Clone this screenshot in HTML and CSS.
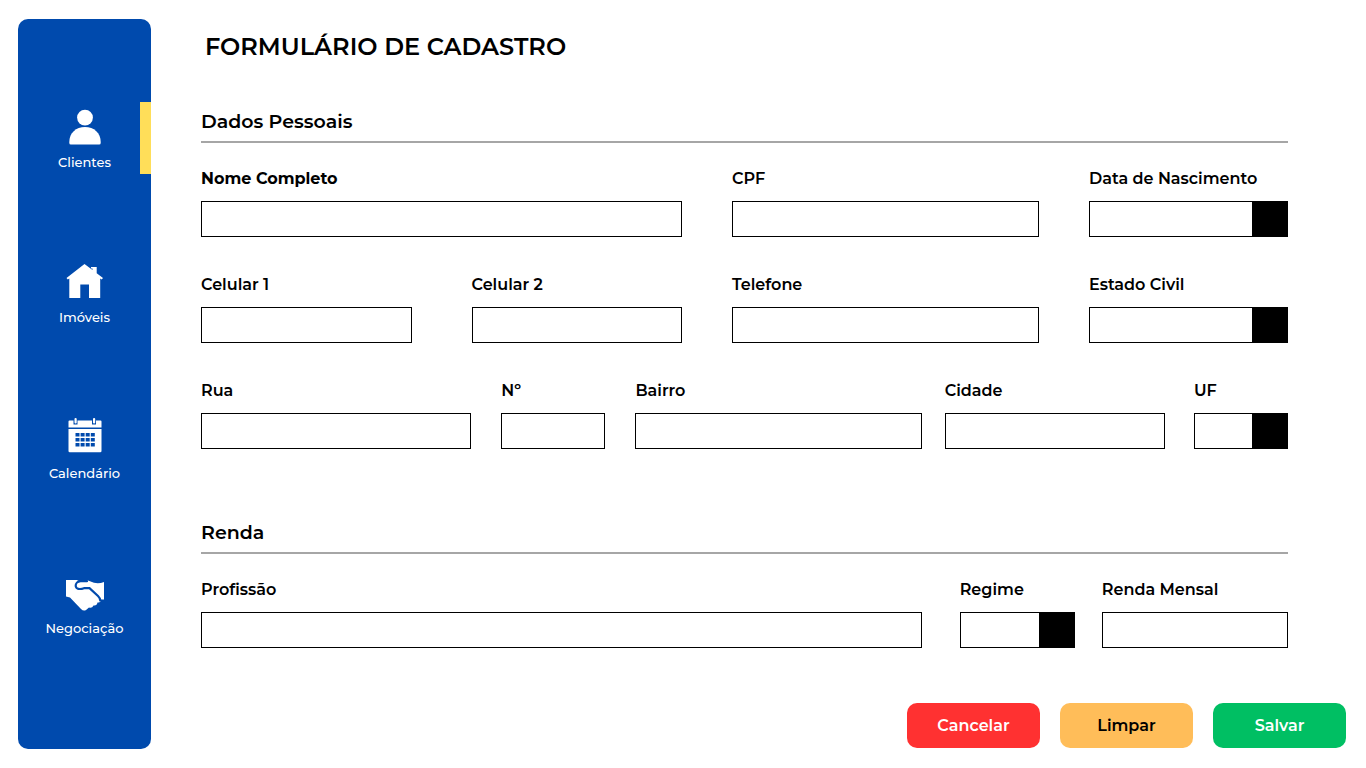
FILE: index.html
```html
<!DOCTYPE html>
<html lang="pt-BR">
<head>
<meta charset="utf-8">
<meta name="viewport" content="width=device-width, initial-scale=1">
<title>Formulário de Cadastro</title>
<link rel="stylesheet" href="styles.css">
</head>
<body>
<nav class="sidebar">
  <a class="nav-item active" href="#clientes">
    <svg class="nav-icon" viewBox="0 0 40 36" aria-hidden="true"><circle cx="20" cy="8.600" r="7.900"/><path d="M4.300 34V33C4.300 24 11 18 20 18S35.700 24 35.700 33V34Q35.700 35.500 34.200 35.500H5.800Q4.300 35.500 4.300 34Z"/></svg>
    <span>Clientes</span>
  </a>
  <a class="nav-item" href="#imoveis">
    <svg class="nav-icon" viewBox="0 0 40 36" aria-hidden="true"><path d="M19.500 0 27.500 6V4.600H26V3H31.700V9.300L38 14 36.700 15.500 35.200 14.500V34H24V20.500H15.300V34H4.300V14.500L2.800 15.500 1.500 14Z"/></svg>
    <span>Imóveis</span>
  </a>
  <a class="nav-item" href="#calendario">
    <svg class="nav-icon" viewBox="0 0 40 36" aria-hidden="true"><path d="M3.500 1.500Q3.500 .500 4.500 .500H8.500V4.500H12.500V.500H27V4.500H31V.500H35.500Q36.500 .500 36.500 1.500V7.500H3.500Z"/><rect x="9.500" y="-2" width="2.200" height="5.500" rx="1"/><rect x="28" y="-2" width="2.200" height="5.500" rx="1"/><path fill-rule="evenodd" d="M3.500 9H36.500V31Q36.500 32.300 35.200 32.300H4.800Q3.500 32.300 3.500 31ZM10.500 13v3.500h4V13ZM15.600 13v3.500h4V13ZM20.700 13v3.500h4V13ZM25.800 13v3.500h4V13ZM10.500 18v3.500h4V18ZM15.600 18v3.500h4V18ZM20.700 18v3.500h4V18ZM25.800 18v3.500h4V18ZM10.500 23v3.500h4V23ZM15.600 23v3.500h4V23ZM20.700 23v3.500h4V23ZM25.800 23v3.500h4V23Z"/></svg>
    <span>Calendário</span>
  </a>
  <a class="nav-item" href="#negociacao">
    <svg class="nav-icon" viewBox="0 0 40 36" aria-hidden="true"><path d="M1 5H12Q14 6.500 17 5.500Q20 4.500 23 5.500L29 7.800Q34 9 39 7V24.500H36Q36 28 32.500 27.500Q32 31 28.500 30.500Q27 33.500 24 32.500L21 35Q18.500 36.500 16 34L5 22.500L1 21.500Z"/><path class="grip" d="M22 6.200H15.500C12.500 6.500 10.500 8.500 10.700 11C11 14 14.500 14.800 19 13.200H24.500L33 21Q35 23 35.300 25.500"/></svg>
    <span>Negociação</span>
  </a>
</nav>

<main class="content">
  <form>
    <h1>FORMULÁRIO DE CADASTRO</h1>

    <section class="section">
      <h2>Dados Pessoais</h2>
      <div class="rows">
        <div class="row personal">
          <div class="field main-field"><label for="nome">Nome Completo</label><input id="nome" type="text"></div>
          <div class="field"><label for="cpf">CPF</label><input id="cpf" type="text"></div>
          <div class="field"><label for="nascimento">Data de Nascimento</label>
            <div class="date"><input id="nascimento" type="text"><button type="button" aria-label="Abrir calendário"></button></div>
          </div>
        </div>
        <div class="row personal">
          <div class="row phones">
            <div class="field"><label for="celular1">Celular 1</label><input id="celular1" type="text"></div>
            <div class="field"><label for="celular2">Celular 2</label><input id="celular2" type="text"></div>
          </div>
          <div class="field"><label for="telefone">Telefone</label><input id="telefone" type="text"></div>
          <div class="field"><label for="civil">Estado Civil</label><select id="civil"><option></option></select></div>
        </div>
        <div class="row address">
          <div class="row street">
            <div class="field"><label for="rua">Rua</label><input id="rua" type="text"></div>
            <div class="field"><label for="numero">Nº</label><input id="numero" type="text"></div>
            <div class="field"><label for="bairro">Bairro</label><input id="bairro" type="text"></div>
          </div>
          <div class="row city">
            <div class="field"><label for="cidade">Cidade</label><input id="cidade" type="text"></div>
            <div class="field"><label for="uf">UF</label><select id="uf"><option></option></select></div>
          </div>
        </div>
      </div>
    </section>

    <section class="section">
      <h2>Renda</h2>
      <div class="row income">
        <div class="field"><label for="profissao">Profissão</label><input id="profissao" type="text"></div>
        <div class="row earnings">
          <div class="field"><label for="regime">Regime</label><select id="regime"><option></option></select></div>
          <div class="field"><label for="renda">Renda Mensal</label><input id="renda" type="text"></div>
        </div>
      </div>
    </section>

    <div class="actions">
      <button class="btn cancel" type="button">Cancelar</button>
      <button class="btn clear" type="reset">Limpar</button>
      <button class="btn save" type="submit">Salvar</button>
    </div>
  </form>
</main>
</body>
</html>
```
FILE: styles.css
```css
* { box-sizing: border-box; }

body {
  margin: 0;
  min-height: 100vh;
  display: flex;
  gap: 50px;
  padding: 19px 20px 19px 18px;
  background: #fff;
  color: #000;
  font-family: Montserrat, Inter, sans-serif;
}

.sidebar {
  flex: 0 0 133px;
  display: flex;
  flex-direction: column;
  justify-content: space-between;
  padding: 83px 0 109px;
  border-radius: 10px;
  background: #004aad;
}

.nav-item {
  display: flex;
  flex-direction: column;
  align-items: center;
  gap: 7px;
  height: 72px;
  padding-top: 7px;
  color: #fff;
  font-size: 13px;
  font-weight: 500;
  line-height: 20px;
  text-decoration: none;
}

.nav-item.active {
  background: linear-gradient(#ffde59, #ffde59) right / 11px 100% no-repeat;
}

.nav-icon { width: 40px; height: 36px; fill: #fff; overflow: visible; }
.grip { fill: none; stroke: #004aad; stroke-width: 2.2; stroke-linecap: round; }

.content { flex: 1; min-width: 0; }

h1 {
  margin: 12px 4px 0;
  font-size: 24px;
  font-weight: 600;
  line-height: 32px;
}

.section { margin-right: 58px; }
.section:first-of-type { margin-top: 47px; }
.section + .section { margin-top: 72px; }

h2 {
  margin: 0 0 26px;
  padding-bottom: 7px;
  border-bottom: 2px solid #a6a6a6;
  font-size: 19px;
  font-weight: 600;
  line-height: 24px;
}

.rows { display: grid; gap: 38px; }
.row { display: grid; }
.personal { grid-template-columns: 481fr 307fr 199fr; gap: 50px; }
.phones { grid-template-columns: 1fr 1fr; gap: 60px; }
.address { grid-template-columns: 720fr 343fr; gap: 23px; }
.street { grid-template-columns: 270fr 104fr 286fr; gap: 30px; }
.city { grid-template-columns: 220fr 94fr; gap: 29px; }
.income { grid-template-columns: 720fr 328fr; gap: 38px; }
.earnings { grid-template-columns: 115fr 186fr; gap: 27px; }

.field {
  display: flex;
  flex-direction: column;
  gap: 12px;
  min-width: 0;
}

label {
  font-size: 16px;
  font-weight: 600;
  line-height: 20px;
  white-space: nowrap;
}

.main-field label { font-weight: 700; }

input, select {
  width: 100%;
  min-width: 0;
  height: 36px;
  margin: 0;
  padding: 0 8px;
  border: 1px solid #000;
  border-radius: 0;
  background: #fff;
  font: inherit;
}

select {
  appearance: none;
  padding-right: 44px;
  background: linear-gradient(#000, #000) right / 35px 100% no-repeat #fff;
}

.date { display: flex; }
.date button { flex: 0 0 35px; padding: 0; border: 0; background: #000; }

.actions {
  display: flex;
  justify-content: flex-end;
  gap: 20px;
  margin-top: 55px;
}

.btn {
  width: 133px;
  height: 45px;
  padding: 0;
  border: 0;
  border-radius: 10px;
  color: #fff;
  font: inherit;
  font-size: 16px;
  font-weight: 600;
}

.cancel { background: #ff3131; }
.clear { background: #ffbd59; color: #000; }
.save { background: #00bf63; }
```
